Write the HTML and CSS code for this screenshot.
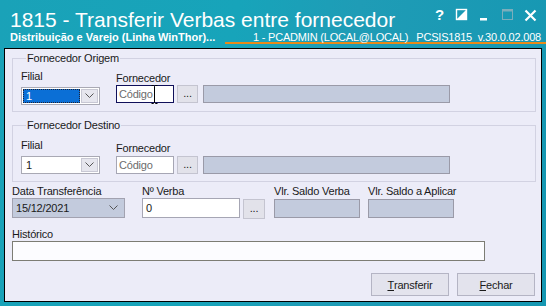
FILE: index.html
```html
<!DOCTYPE html>
<html lang="pt">
<head>
<meta charset="utf-8">
<title>1815 - Transferir Verbas entre fornecedor</title>
<link rel="stylesheet" href="styles.css">
</head>
<body>
<div class="window">
  <div class="titlebar">
    <span class="title">1815 - Transferir Verbas entre fornecedor</span>
    <svg class="ctrls" width="112" height="16" viewBox="0 0 112 16">
      <text x="1" y="13" class="help">?</text>
      <rect x="22.5" y="2.5" width="10" height="10" fill="none" stroke="#fff" stroke-width="1.4"/>
      <polygon points="33,2 33,13 22,13" fill="#fff"/>
      <rect x="46" y="11" width="7" height="2.5" fill="#fff"/>
      <rect x="68.5" y="2.5" width="10" height="10" fill="none" stroke="#7aaebc" stroke-width="1"/>
      <rect x="68" y="2" width="11" height="2.5" fill="#7aaebc"/>
      <path d="M91.5 3.5 L101.5 13.5 M101.5 3.5 L91.5 13.5" stroke="#fff" stroke-width="2.2"/>
    </svg>
  </div>
  <div class="subbar">
    <span class="sub-left">Distribuição e Varejo (Linha WinThor)...</span>
    <div class="sub-right">
      <span>1 - PCADMIN (LOCAL@LOCAL)</span>
      <span class="sub-ver">PCSIS1815&nbsp; v.30.0.02.008</span>
    </div>
  </div>
  <div class="panel">
    <fieldset class="group g1">
      <legend>Fornecedor Origem</legend>
      <div class="row">
        <div class="col-filial">
          <div class="lbl">Filial</div>
          <div class="combo">
            <div class="combo-val sel"><span>1</span></div>
            <div class="combo-btn"><svg width="9" height="6" viewBox="0 0 9 6"><path d="M0.5 0.5 L4.5 4.5 L8.5 0.5" fill="none" stroke="#555" stroke-width="1"/></svg></div>
          </div>
        </div>
        <div class="col-forn">
          <div class="lbl">Fornecedor</div>
          <div class="forn-row">
            <div class="input code focus"><span class="ph">Código</span>
              <svg class="ibeam" width="7" height="19" viewBox="0 0 7 19"><path d="M0.5 0.5 H2.5 L3.5 1.5 L4.5 0.5 H6.5 M3.5 1.5 V17.5 M0.5 18.5 H2.5 L3.5 17.5 L4.5 18.5 H6.5" fill="none" stroke="#000" stroke-width="1"/></svg>
            </div>
            <div class="dots">...</div>
            <div class="disabled wide"></div>
          </div>
        </div>
      </div>
    </fieldset>
    <fieldset class="group g2">
      <legend>Fornecedor Destino</legend>
      <div class="row">
        <div class="col-filial">
          <div class="lbl">Filial</div>
          <div class="combo">
            <div class="combo-val"><span>1</span></div>
            <div class="combo-btn"><svg width="9" height="6" viewBox="0 0 9 6"><path d="M0.5 0.5 L4.5 4.5 L8.5 0.5" fill="none" stroke="#555" stroke-width="1"/></svg></div>
          </div>
        </div>
        <div class="col-forn">
          <div class="lbl">Fornecedor</div>
          <div class="forn-row">
            <div class="input code"><span class="ph">Código</span></div>
            <div class="dots">...</div>
            <div class="disabled wide"></div>
          </div>
        </div>
      </div>
    </fieldset>
    <div class="row3">
      <div class="col-data">
        <div class="lbl">Data Transferência</div>
        <div class="datebox"><span>15/12/2021</span><svg width="9" height="6" viewBox="0 0 9 6"><path d="M0.5 0.5 L4.5 4.5 L8.5 0.5" fill="none" stroke="#555" stroke-width="1"/></svg></div>
      </div>
      <div class="col-verba">
        <div class="lbl">Nº Verba</div>
        <div class="verba-row">
          <div class="input verba"><span>0</span></div>
          <div class="dots tall">...</div>
        </div>
      </div>
      <div class="col-saldo">
        <div class="lbl">Vlr. Saldo Verba</div>
        <div class="disabled saldo"></div>
      </div>
      <div class="col-saldo2">
        <div class="lbl">Vlr. Saldo a Aplicar</div>
        <div class="disabled saldo"></div>
      </div>
    </div>
    <div class="hist">
      <div class="lbl">Histórico</div>
      <div class="textarea"></div>
    </div>
    <div class="buttons">
      <div class="btn"><u>T</u>ransferir</div>
      <div class="btn"><u>F</u>echar</div>
    </div>
  </div>
</div>
</body>
</html>
```
FILE: styles.css
```css
* { box-sizing: border-box; }
html, body { margin: 0; padding: 0; }
body { width: 546px; height: 306px; overflow: hidden; font-family: "Liberation Sans", Arial, sans-serif; }

.window {
  width: 546px; height: 306px;
  background: linear-gradient(100deg, #1aa2b8 0%, #17a4ba 40%, #1f9cb6 60%, #1597b2 100%);
  display: flex; flex-direction: column;
}
.titlebar { height: 31px; padding-top: 8px; padding-left: 10px; display: flex; align-items: flex-start; }
.title { color: #fff; font-size: 21px; line-height: 23px; white-space: nowrap; }
.ctrls { margin-left: auto; margin-top: -1px; }
.help { font: bold 15px "Liberation Sans", Arial, sans-serif; fill: #fff; }

.subbar { height: 13px; display: flex; align-items: flex-start; color: #fff; font-size: 11px; line-height: 13px; white-space: nowrap; }
.sub-left { font-weight: bold; padding-left: 10px; width: 225px; }
.sub-right { flex: 1; height: 13px; border-bottom: 2px solid #e88a1a; display: flex; padding-left: 28px; padding-right: 5px; font-size: 11px; letter-spacing: -0.2px; }
.sub-right span { line-height: 13px; }
.sub-ver { margin-left: auto; }

.panel {
  flex: 1; margin: 4px 4px 4px 4px;
  border: 1px solid #000;
  background: #ececf8;
  display: flex; flex-direction: column;
  padding: 0 0 0 7px;
  font-size: 11px; letter-spacing: -0.2px; color: #1a1a1a;
}
.lbl { line-height: 13px; white-space: nowrap; }

.group { border: 1px solid #d2d2e2; margin: 3px 5px 0 0; padding: 0 0 6px 8px; min-width: 0; }
.group legend { font-size: 11px; line-height: 13px; padding: 0 1px; margin-left: 5px; }
.g2 { margin-top: 7px; padding-bottom: 7px; }

.row { display: flex; align-items: flex-start; }
.col-filial { width: 79px; margin-top: 5px; }
.col-filial .combo { margin-top: 4px; }
.col-forn { margin-left: 16px; margin-top: 7px; }
.g2 .col-filial { margin-top: 7px; }
.g2 .col-filial .combo { margin-top: 4px; }
.g2 .col-forn { margin-top: 10px; }
.g2 .forn-row { margin-top: 1px; }

.combo { width: 79px; height: 18px; border: 1px solid #a9a9b4; background: #fff; display: flex; padding: 1px; }
.combo-val { flex: 1; display: flex; align-items: center; padding-left: 3px; }
.combo-val.sel { background: #0b6fd6; color: #fff; border: 1px dotted #223; padding-left: 2px; }
.combo-btn { width: 17px; margin-left: 1px; background: #e6e6ee; border: 1px solid #c8c8d4; display: flex; align-items: center; justify-content: center; }

.forn-row { display: flex; }
.input { background: #fff; border: 1px solid #a6a6b4; height: 18px; display: flex; align-items: center; padding-left: 2px; position: relative; }
.input.code { width: 58px; }
.input.focus { border-color: #10105a; }
.ph { color: #6c6c6c; }
.ibeam { position: absolute; left: 34px; top: -1px; }
.dots { width: 21px; height: 18px; margin-left: 3px; background: #e2e2ea; border: 1px solid #c4c4d0; display: flex; align-items: center; justify-content: center; line-height: 10px; padding-bottom: 2px; }
.disabled { background: #c3cbdd; border: 1px solid #9a9aa8; height: 18px; }
.wide { width: 247px; margin-left: 5px; }

.row3 { display: flex; align-items: flex-start; margin-top: 3px; }
.col-data { width: 113px; }
.datebox { width: 113px; height: 20px; background: #c3cbdd; border: 1px solid #a2a2b0; display: flex; align-items: center; justify-content: space-between; padding: 0 6px 0 3px; }
.col-verba { margin-left: 17px; }
.verba-row { display: flex; }
.input.verba { width: 98px; height: 20px; padding-left: 3px; }
.dots.tall { height: 20px; margin-top: 1px; width: 22px; }
.col-saldo { margin-left: 9px; }
.col-saldo2 { margin-left: 8px; }
.saldo { width: 86px; height: 19px; margin-top: 1px; }

.hist { margin-top: 9px; }
.textarea { width: 473px; height: 20px; background: #fcfcff; border: 1px solid #7c7c74; }

.buttons { display: flex; justify-content: flex-end; gap: 8px; margin-top: 12px; padding-right: 6px; }
.btn { width: 78px; height: 23px; background: #e3e3ed; border: 1px solid #b4b4c4; display: flex; align-items: center; justify-content: center; font-size: 11px; }
.btn u { text-decoration-thickness: 1px; text-underline-offset: 1px; }
```
